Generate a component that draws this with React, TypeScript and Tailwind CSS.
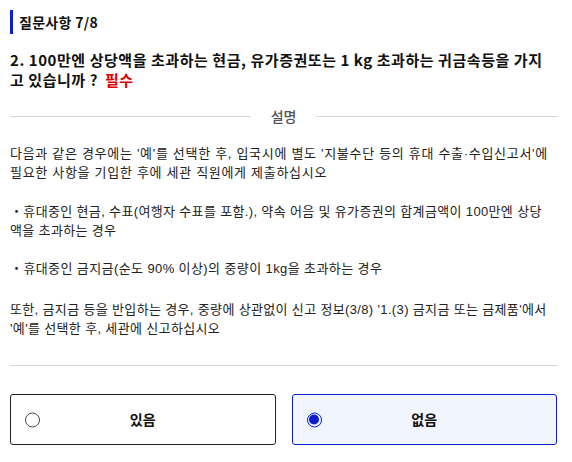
import React from "react";

const font = { fontFamily: '"Noto Sans CJK KR", "Liberation Sans", sans-serif' };
const bodyFont = { fontFamily: '"Liberation Sans", "Noto Sans CJK KR", sans-serif' };

export default function App() {
  return (
    <div className="w-[572px] h-[462px] bg-white text-[#111]" style={font}>
      <div className="pl-[10px] pr-[15px] pt-[10px]">
        <div className="flex items-center h-[24px] border-l-[3px] border-[#0a1ecf] pl-[6px]">
          <span className="text-[14px] font-bold leading-[24px] tracking-[0.3px]">질문사항 7/8</span>
        </div>
        <div className="mt-[16px] text-[15px] font-bold leading-[20px] tracking-[0.55px] whitespace-nowrap">
          2. 100만엔 상당액을 초과하는 현금, 유가증권또는 1 kg 초과하는 귀금속등을 가지
          <br />
          고 있습니까 ?{" "}
          <span className="text-[#e00000] ml-[3px]">필수</span>
        </div>
        <div className="mt-[16px] flex items-center h-[20px]">
          <div className="flex-1 h-px bg-[#d6d6d6]"></div>
          <span className="px-[20px] text-[14px] text-[#555] font-medium">설명</span>
          <div className="flex-1 h-px bg-[#d6d6d6]"></div>
        </div>
        <div className="mt-[18px] text-[13px] leading-[19px] text-[#222] whitespace-nowrap" style={bodyFont}>
          <p className="tracking-[0.7px]">
            다음과 같은 경우에는 '예'를 선택한 후, 입국시에 별도 '지불수단 등의 휴대 수출·수입신고서'에
            <br />
            필요한 사항을 기입한 후에 세관 직원에게 제출하십시오
          </p>
          <p className="mt-[20px] tracking-[0.35px]">
            ・휴대중인 현금, 수표(여행자 수표를 포함.), 약속 어음 및 유가증권의 합계금액이 100만엔 상당
            <br />
            액을 초과하는 경우
          </p>
          <p className="mt-[19px] tracking-[0.4px]">・휴대중인 금지금(순도 90% 이상)의 중량이 1kg을 초과하는 경우</p>
          <p className="mt-[22px] tracking-[0.35px]">
            또한, 금지금 등을 반입하는 경우, 중량에 상관없이 신고 정보(3/8) '1.(3) 금지금 또는 금제품'에서
            <br />
            '예'를 선택한 후, 세관에 신고하십시오
          </p>
        </div>
        <div className="mt-[27px] h-px bg-[#d6d6d6]"></div>
        <div className="mt-[28px] grid grid-cols-2 gap-[16px]">
          <div className="relative h-[51px] rounded-[3px] border border-[#222] flex items-center justify-center">
            <span className="absolute left-[14px] top-1/2 -translate-y-1/2 w-[15px] h-[15px] rounded-full border border-[#444]"></span>
            <span className="text-[14px] font-bold">있음</span>
          </div>
          <div className="relative h-[51px] rounded-[3px] border border-[#0a1ecf] bg-[#f1f5fe] flex items-center justify-center">
            <span className="absolute left-[14px] top-1/2 -translate-y-1/2 w-[15px] h-[15px] rounded-full border-[1.5px] border-[#0a1ecf] flex items-center justify-center">
              <span className="w-[10px] h-[10px] rounded-full bg-[#0a1ecf]"></span>
            </span>
            <span className="text-[14px] font-bold">없음</span>
          </div>
        </div>
      </div>
    </div>
  );
}
